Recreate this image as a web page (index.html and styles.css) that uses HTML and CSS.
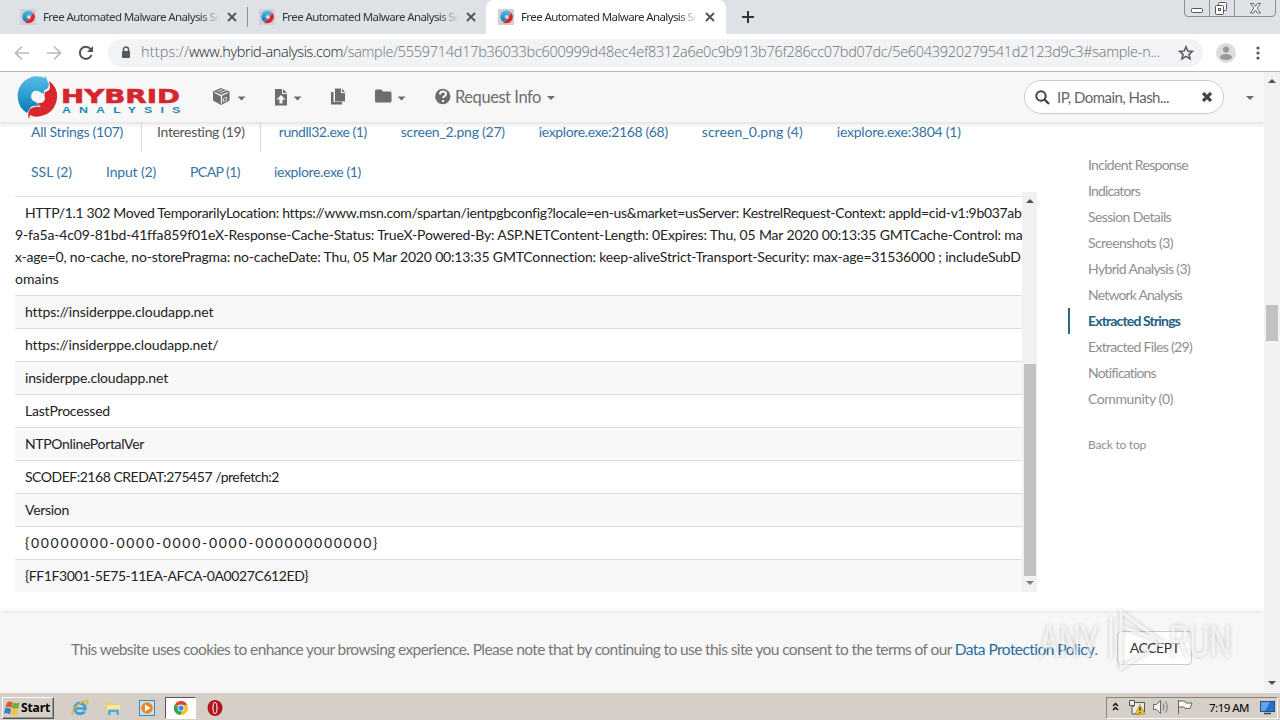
FILE: index.html
```html
<!DOCTYPE html>
<html lang="en">
<head>
<meta charset="utf-8">
<title>Free Automated Malware Analysis Service</title>
<link rel="stylesheet" href="styles.css">
</head>
<body>
<svg class="defs" width="0" height="0" aria-hidden="true">
  <defs>
    <linearGradient id="blue" x1="0" y1="0" x2="0" y2="1"><stop offset="0" stop-color="#5cbde8"/><stop offset=".5" stop-color="#2d9fd6"/><stop offset="1" stop-color="#0d78b0"/></linearGradient>
    <symbol id="swirl" viewBox="0 0 40 44">
      <path fill="url(#blue)" d="M28 0 28 3A19.500 19.500 0 0 0 1 17Q-1 31 10 38L14 32Q17 30 22 31L19 27Q14 26 14 21Q15 15 21 16L27 19Q26 15 30 14Q33 11 31 7Z"/>
      <path fill="#d9252c" d="M32 6Q41 12 40 23Q38 38 24 41Q18 43 13 40L12 44Q10 39 13 34Q17 31 24 32L20 28Q28 29 28 23Q27 19 28 17Q33 16 33 12Z"/>
    </symbol>
    <symbol id="close" viewBox="0 0 10 10"><path d="M1 1 9 9M9 1 1 9" stroke="#50545a" stroke-width="1.800"/></symbol>
    <symbol id="up" viewBox="0 0 8 4"><path fill="#505050" d="M0 4 4 0 8 4z"/></symbol>
    <symbol id="down" viewBox="0 0 8 4"><path fill="#505050" d="M0 0 4 4 8 0z"/></symbol>
  </defs>
</svg>

<header class="tabstrip">
  <div class="tab"><svg class="fav"><use href="#swirl" x="2" y="1" width="13" height="14"/></svg><span class="title"><span class="fit" data-w="178">Free Automated Malware Analysis Se</span></span><svg class="x"><use href="#close"/></svg></div>
  <div class="tab second"><svg class="fav"><use href="#swirl" x="2" y="1" width="13" height="14"/></svg><span class="title"><span class="fit" data-w="178">Free Automated Malware Analysis Se</span></span><svg class="x"><use href="#close"/></svg></div>
  <div class="tab active"><svg class="fav"><use href="#swirl" x="2" y="1" width="13" height="14"/></svg><span class="title"><span class="fit" data-w="178">Free Automated Malware Analysis Se</span></span><svg class="x"><use href="#close"/></svg></div>
  <svg class="plus" viewBox="0 0 12 12"><path d="M6 0V12M0 6H12" stroke="#333" stroke-width="2"/></svg>
  <svg class="winctl" viewBox="0 0 94 18"><path d="M1.500 0V13Q1.500 16.500 5 16.500H89Q92.500 16.500 92.500 13V0M26.500 0V16M51.500 0V16" fill="none" stroke="#8c9097"/><g fill="#fff" stroke="#555"><rect x="8.500" y="8.500" width="11" height="4" rx="1"/><rect x="35.500" y="2.500" width="8" height="8" rx="1"/><rect x="32.500" y="5.500" width="8" height="9" rx="1"/><rect x="35.500" y="8.500" width="2" height="2"/></g><path d="M67.500 3.500h3l2 3 2-3h3l-3.500 4.500 3.500 5h-3l-2-3-2 3h-3l3.500-5z" fill="#fff" stroke="#555" stroke-width=".9"/></svg>
</header>

<div class="toolbar">
  <svg class="navbtns" viewBox="0 0 100 28"><g fill="none" stroke-width="1.700"><path d="M29 14H16M22 7.500 15.500 14l6.500 6.500M47 14h13M54 7.500l6.500 6.500-6.500 6.500" stroke="#b9bbbd"/><path d="M90.500 10A6 6 0 1 0 91.500 16" stroke="#50545a" stroke-width="2"/></g><path d="M93 7v6h-6z" fill="#50545a"/></svg>
  <div class="omnibox">
    <svg class="lock" viewBox="0 0 10 13"><path d="M2.500 6V3.500a2.500 2.500 0 0 1 5 0V6" fill="none" stroke="#55595e" stroke-width="1.500"/><rect x="1" y="5" width="8" height="7" rx="1" fill="#55595e"/></svg>
    <div class="url"><span class="fit" data-w="48">https://</span><span class="fit host" data-w="154">www.hybrid-analysis.com</span><span class="fit" data-w="817">/sample/5559714d17b36033bc600999d48ec4ef8312a6e0c9b913b76f286cc07bd07dc/5e6043920279541d2123d9c3#sample-n...</span></div>
    <svg class="star" viewBox="0 0 16 16"><path d="M8 1.700 9.800 6l4.700.3-3.600 3 1.200 4.600L8 11.400l-4.100 2.500 1.200-4.600-3.600-3L6.200 6z" fill="none" stroke="#55595e" stroke-width="1.500"/></svg>
  </div>
  <svg class="avatar" viewBox="0 0 20 20"><circle cx="10" cy="10" r="10" fill="#dcdcdc"/><circle cx="10" cy="6.500" r="3" fill="#999"/><ellipse cx="10" cy="14" rx="6" ry="3" fill="#999"/></svg>
  <svg class="dots" viewBox="0 0 4 14"><g fill="#55595e"><circle cx="2" cy="2" r="1.600"/><circle cx="2" cy="7" r="1.600"/><circle cx="2" cy="12" r="1.600"/></g></svg>
</div>

<div class="viewport">
  <div class="page">
    <nav class="sitebar">
      <svg class="logo" viewBox="0 0 166 46"><use href="#swirl" x="0" y="1" width="42" height="44"/>
        <text class="l1" x="45" y="29" textLength="119" lengthAdjust="spacingAndGlyphs">HYBRID</text>
        <text class="l2" transform="translate(46 38.500) scale(1.300 1)" textLength="91">ANALYSIS</text></svg>
      <svg class="icons" viewBox="0 0 340 24"><g fill="#6d6d6d">
        <path d="M8 3 0 6.500v9L8 20l8.500-4.500v-9z"/><path d="M1.500 7.500 8 10.500 15 7.500M8.500 10.500V18.500" stroke="#f7f7f7" stroke-width="1.300" fill="none"/><path d="M4 6.500 10 4.500M6.500 8 13 5.500M10.500 13.500l3-1.300v3l-3 1.300z" stroke="#f7f7f7" stroke-width=".8" fill="none"/>
        <path d="M62 4h7v5h5v11.500H62zM70 4l4 4h-4z"/><path d="M68 10l4.500 4.500H69.500V18.500h-3v-4H63.500z" fill="#f7f7f7"/>
        <path d="M118 7h2.500v10H129v2.500H118zM122 3.500h6v4.500h4v8.500h-10zM129 3.500 132 7h-3z"/>
        <path d="M162 6q0-1.500 1.500-1.500H168q1.500 0 1.500 2H177q1.500 0 1.500 1.500v8q0 1.500-1.500 1.500H163.500Q162 17.500 162 16z"/>
        <circle cx="229.800" cy="11.500" r="7.700"/>
        <path d="M24.500 11.500h8l-4 4zM80.500 11.500h8l-4 4zM184.500 11.500h8l-4 4z"/></g>
        <path d="M227 9.500q0-3 3-3t3 2.500q0 1.500-1.800 2.300-1 .5-1 1.700M230 15v2" stroke="#fff" stroke-width="2" fill="none"/></svg>
      <span class="request"><span class="fit" data-w="86">Request Info</span></span>
      <svg class="caret" viewBox="0 0 8 4"><path d="M0 0h8L4 4z" fill="#6d6d6d"/></svg>
      <div class="search">
        <svg viewBox="0 0 15 15" width="15" height="15"><circle cx="6" cy="6" r="4.700" fill="none" stroke="#444" stroke-width="2"/><path d="m9.500 9.500 4.500 4.500" stroke="#444" stroke-width="2.400"/></svg>
        <span class="ph"><span class="fit" data-w="112">IP, Domain, Hash...</span></span>
        <svg viewBox="0 0 10 10" width="10" height="10"><path d="m1 1 8 8M9 1 1 9" stroke="#444" stroke-width="3.200"/></svg>
      </div>
      <svg class="caret" viewBox="0 0 8 4"><path d="M0 0h8L4 4z" fill="#6d6d6d"/></svg>
    </nav>

    <div class="columns">
      <main class="content">
        <ul class="pills">
          <li><span class="fit" data-w="92">All Strings (107)</span></li>
          <li class="on"><span class="fit" data-w="88">Interesting (19)</span></li>
          <li><span class="fit" data-w="88">rundll32.exe (1)</span></li>
          <li><span class="fit" data-w="104">screen_2.png (27)</span></li>
          <li><span class="fit" data-w="129">iexplore.exe:2168 (68)</span></li>
          <li><span class="fit" data-w="101">screen_0.png (4)</span></li>
          <li><span class="fit" data-w="124">iexplore.exe:3804 (1)</span></li>
        </ul>
        <ul class="pills">
          <li><span class="fit" data-w="41">SSL (2)</span></li>
          <li><span class="fit" data-w="50">Input (2)</span></li>
          <li><span class="fit" data-w="50">PCAP (1)</span></li>
          <li><span class="fit" data-w="87">iexplore.exe (1)</span></li>
        </ul>
        <div class="strings">
          <div class="rows">
            <div class="row long">
              <div class="first"><span class="fit" data-w="996">HTTP/1.1 302 Moved TemporarilyLocation: https://www.msn.com/spartan/ientpgbconfig?locale=en-us&amp;market=usServer: KestrelRequest-Context: appId=cid-v1:9b037ab</span></div>
              <div><span class="fit" data-w="1007">9-fa5a-4c09-81bd-41ffa859f01eX-Response-Cache-Status: TrueX-Powered-By: ASP.NETContent-Length: 0Expires: Thu, 05 Mar 2020 00:13:35 GMTCache-Control: ma</span></div>
              <div><span class="fit" data-w="1006">x-age=0, no-cache, no-storePragma: no-cacheDate: Thu, 05 Mar 2020 00:13:35 GMTConnection: keep-aliveStrict-Transport-Security: max-age=31536000 ; includeSubD</span></div>
              <div><span class="fit" data-w="44">omains</span></div>
            </div>
            <div class="row"><span class="fit" data-w="188">https://insiderppe.cloudapp.net</span></div>
            <div class="row"><span class="fit" data-w="193">https://insiderppe.cloudapp.net/</span></div>
            <div class="row"><span class="fit" data-w="143">insiderppe.cloudapp.net</span></div>
            <div class="row"><span class="fit" data-w="85">LastProcessed</span></div>
            <div class="row"><span class="fit" data-w="119">NTPOnlinePortalVer</span></div>
            <div class="row"><span class="fit" data-w="254">SCODEF:2168 CREDAT:275457 /prefetch:2</span></div>
            <div class="row"><span class="fit" data-w="44">Version</span></div>
            <div class="row"><span class="fit" data-w="354">{00000000-0000-0000-0000-000000000000}</span></div>
            <div class="row"><span class="fit" data-w="283">{FF1F3001-5E75-11EA-AFCA-0A0027C612ED}</span></div>
          </div>
          <div class="bar inner"><svg><use href="#up"/></svg><i class="thumb"></i><svg class="dim"><use href="#down"/></svg></div>
        </div>
      </main>
      <aside class="toc">
        <a><span class="fit" data-w="100">Incident Response</span></a>
        <a><span class="fit" data-w="52">Indicators</span></a>
        <a><span class="fit" data-w="83">Session Details</span></a>
        <a><span class="fit" data-w="85">Screenshots (3)</span></a>
        <a><span class="fit" data-w="102">Hybrid Analysis (3)</span></a>
        <a><span class="fit" data-w="94">Network Analysis</span></a>
        <a class="current"><span class="fit" data-w="92">Extracted Strings</span></a>
        <a><span class="fit" data-w="104">Extracted Files (29)</span></a>
        <a><span class="fit" data-w="68">Notifications</span></a>
        <a><span class="fit" data-w="85">Community (0)</span></a>
        <a class="top"><span class="fit" data-w="58">Back to top</span></a>
      </aside>
    </div>

    <div class="cookies">
      <span class="msg"><span class="fit" data-w="881">This website uses cookies to enhance your browsing experience. Please note that by continuing to use this site you consent to the terms of our</span></span>
      <span class="policy"><span class="fit" data-w="140">Data Protection Policy</span></span><span class="dot">.</span>
      <button class="accept"><span class="fit" data-w="50">ACCEPT</span></button>
      <svg class="watermark" viewBox="0 0 200 66">
        <g class="halo"><text x="4" y="49" textLength="60" lengthAdjust="spacingAndGlyphs">ANY</text><text x="134" y="49" textLength="63" lengthAdjust="spacingAndGlyphs">RUN</text><path d="M86 4v56l41-26zM86 18l34 13M76 9v40"/></g>
      </svg>
    </div>
  </div>
  <div class="bar outer"><svg><use href="#up"/></svg><i class="thumb"></i><svg><use href="#down"/></svg></div>
</div>

<footer class="taskbar">
  <div class="start"><svg viewBox="0 0 16 16" width="16" height="16"><path d="M3 2.500Q6 .5 8.500 2.500L7.500 8Q4.500 6 1.500 7.500z" fill="#e2562a"/><path d="M9 2.500q3 1.500 6.500 0L14.500 8q-3 1.500-6.500 0z" fill="#6eae3a"/><path d="M1 8.500q3-1.500 6 .5l-1 5.500Q3 12.500 0 14z" fill="#3b7fd0"/><path d="M7.800 9q3 1.500 6.200 0l-1 5.500q-3 1.500-6 0z" fill="#f4c430"/></svg><span class="fit" data-w="29">Start</span></div>
  <svg class="ie" viewBox="0 0 18 18" width="18" height="18"><circle cx="9" cy="9.500" r="5.300" fill="none" stroke="#3d9fdc" stroke-width="3"/><path d="M4 9.500h11" stroke="#3d9fdc" stroke-width="2.400"/><path d="M11 12.500h6v-2z" fill="#d4cfc8"/><path d="M2 16Q-1 12 7 6T16 2Q18 3 15.500 6" fill="none" stroke="#e7b52a" stroke-width="1.400"/></svg>
  <svg class="folder" viewBox="0 0 16 16" width="16" height="16"><path d="M1 2h5l1 2h8v8H1z" fill="#e9cf72"/><path d="M2 5h13v7H2z" fill="#f7e9a4"/><path d="M3 15V9.500h11V15h-2.500v-3h-6v3z" fill="#55acdc"/></svg>
  <svg class="media" viewBox="0 0 16 16" width="16" height="16"><rect x=".5" y=".5" width="15" height="15" fill="#c9e2f4" stroke="#4189bd"/><circle cx="8" cy="8" r="5.800" fill="#ef8420"/><path d="m6 4.500 5.500 3.500L6 11.500z" fill="#fff"/></svg>
  <div class="running"><svg viewBox="0 0 16 16" width="14" height="14"><circle cx="8" cy="8" r="8" fill="#f4c22b"/><path d="M8 8 1 4A8 8 0 0 0 7 16l3.500-6z" fill="#2ea457"/><path d="M1 4A8 8 0 0 1 15 4L8 6z" fill="#dc4334"/><circle cx="8" cy="8" r="3.900" fill="#fff"/><circle cx="8" cy="8" r="3" fill="#4285e8"/></svg></div>
  <svg class="opera" viewBox="0 0 16 16" width="16" height="16"><ellipse cx="8" cy="8" rx="7.500" ry="8" fill="#b5151c"/><ellipse cx="8" cy="8" rx="2.600" ry="6" fill="#fff"/><ellipse cx="8" cy="8" rx="1.500" ry="5" fill="#a5141a"/></svg>
  <div class="tray">
    <svg viewBox="0 0 100 22" width="100" height="22"><path d="m6 9 2.500-2.500L11 9M6 13l2.500-2.500L11 13" fill="none" stroke="#111" stroke-width="1.500"/>
      <rect x="26.500" y="5.500" width="11" height="9" fill="#e9e9e9" stroke="#555"/><path d="M22.500 3.500h5v5h-5zM25 8.500V17h8" fill="#eee" stroke="#555"/><path d="M33 7.500 38 17H28z" fill="#f5cf21" stroke="#8d7310" stroke-width=".6"/><path d="M33 10v4M33 15v1" stroke="#222" stroke-width="1.200"/>
      <path d="M46.500 7.500h3l4-4v13l-4-4h-3z" fill="#f2f2f2" stroke="#666"/><path d="M56 6.500q2 3.500 0 7M58.500 4.500q3.500 5.500 0 11" fill="none" stroke="#777"/>
      <path d="M71.500 3v14M71.500 4h6l1.500 2h6l-2 5.500h-5l-1-1.500h-5.500z" fill="#f7f7f7" stroke="#666"/></svg>
    <span class="clock"><span class="fit" data-w="40">7:19 AM</span></span>
    <svg class="desk" viewBox="0 0 15 14" width="15" height="14"><rect x=".5" y=".5" width="14" height="10" fill="#2470cf" stroke="#274d85"/><path d="M1 1h9L5 10H1z" fill="#62a3ee"/><path d="M4 12.500h7" stroke="#444" stroke-width="1.500"/></svg>
  </div>
</footer>
<script src="fit.js"></script>
</body>
</html>
```

FILE: styles.css
```css
* { box-sizing: border-box; }
body { margin: 0; width: 1280px; height: 720px; overflow: hidden; display: flex; flex-direction: column; background: #fff; font: 14px/22px Lato, sans-serif; color: #222; }
svg { display: block; flex: none; }
.defs { position: absolute; }
.fit { display: inline-block; white-space: pre; }

/* browser chrome */
.tabstrip { height: 34px; flex: none; display: flex; background: #dee1e6; font: 11.500px/34px "Noto Sans", sans-serif; color: #33363b; }
.tab { display: flex; align-items: center; width: 248px; padding-left: 20px; border-right: 1px solid transparent; border-image: linear-gradient(transparent 8px, #8f9399 8px, #8f9399 26px, transparent 26px) 1; }
.tab.second { width: 238px; padding-left: 11px; border: 0; }
.tab.active { width: 240px; padding-left: 12px; border: 0; background: #fff; border-radius: 8px 8px 0 0; color: #2b2d31; }
.fav { width: 16px; height: 16px; background: #d3cfd2; }
.title { width: 176px; margin-left: 7px; overflow: hidden; -webkit-mask-image: linear-gradient(90deg, #000 158px, transparent); mask-image: linear-gradient(90deg, #000 158px, transparent); }
.x { width: 10px; height: 10px; margin-left: 8px; }
.plus { width: 12px; height: 12px; margin: 11px 0 0 16px; }
.winctl { width: 94px; height: 18px; margin-left: auto; margin-right: 3px; }
.toolbar { height: 38px; flex: none; display: flex; align-items: center; background: #fff; border-bottom: 1px solid #b4b7b4; }
.navbtns { width: 100px; height: 28px; }
.omnibox { width: 1095px; height: 28px; margin-left: 8px; border-radius: 14px; background: #f1f3f4; display: flex; align-items: center; }
.lock { width: 10px; height: 13px; margin-left: 13px; }
.url { width: 1022px; height: 28px; margin-left: 10px; display: flex; font: 300 14.500px/26px "Open Sans", sans-serif; color: #6b7076; }
.host { color: #202124; }
.star { width: 16px; height: 16px; margin-left: 15px; }
.avatar { width: 20px; height: 20px; margin-left: 13px; }
.dots { width: 4px; height: 14px; margin-left: 20px; }

/* page */
.viewport { height: 620px; flex: none; display: flex; }
.page { width: 1264px; display: flex; flex-direction: column; overflow: hidden; }
.sitebar { height: 51px; flex: none; display: flex; align-items: center; background: #f7f7f7; border-bottom: 1px solid #e7e7e7; box-shadow: 0 1px 5px #0002; position: relative; z-index: 1; }
.logo { width: 166px; height: 46px; margin-left: 16px; }
.l1 { font: bold 20px "DejaVu Sans", sans-serif; fill: #d52630; stroke: #d52630; stroke-width: .6px; }
.l2 { font: bold 9.500px "Liberation Sans", sans-serif; fill: #168bb4; }
.icons { width: 340px; height: 24px; margin-left: 31px; margin-right: -98px; }
.request { font-size: 16.500px; color: #6d6d6d; width: 92px; }
.caret { width: 8px; height: 4px; margin-top: 2px; }
.search { margin-left: 469px; margin-right: 22px; width: 200px; height: 34px; border: 1px solid #ccc; border-radius: 17px; background: #fff; display: flex; align-items: center; padding: 0 11px 0 10px; font-size: 15px; color: #666; }
.ph { margin-left: 7px; margin-right: auto; }
.columns { display: flex; flex: none; height: 490px; padding-left: 15px; }
.content { width: 1022px; flex: none; }
.pills { list-style: none; display: flex; gap: 2px; height: 40px; margin: 0; padding: 0; color: #3572a5; }
.pills:first-child { height: 29px; }
.pills li { border: 1px solid transparent; padding: 8px 15px; }
.pills:first-child li { padding-top: 0; border-top: 0; line-height: 17px; }
.pills li.on { border-color: #ddd; border-bottom: 0; color: #555; }
.strings { display: flex; height: 400px; }
.rows { width: 1007px; padding-top: 4px; }
.row { height: 33px; padding: 5px 10px; border-top: 1px solid #ddd; }
.row:nth-child(even) { background: #f8f8f8; }
.row.long { height: 99px; padding: 5px 0; }
.row div { height: 22px; white-space: nowrap; }
.row .first { padding-left: 10px; }
.bar { background: #f1f1f1; display: flex; flex-direction: column; align-items: center; }
.bar svg { width: 8px; height: 4px; margin: 7px 0 6px; }
.inner { width: 15px; }
.inner .thumb { width: 12px; height: 212px; margin-top: 155px; background: #c1c1c1; }
.inner .dim { margin-top: 5px; opacity: .7; }
.outer { width: 16px; }
.outer .thumb { width: 12px; height: 36px; margin: 216px 0 auto; background: #c1c1c1; }
.outer .thumb + svg { margin-bottom: 7px; }
.toc { margin: 29px 0 0 31px; display: flex; flex-direction: column; }
.toc a { height: 26px; line-height: 25px; padding-left: 18px; border-left: 2px solid transparent; font-size: 14px; color: #8f8f8f; }
.toc .current { border-color: #2c6587; color: #255f83; font-weight: bold; }
.toc .top { margin-top: 20px; font-size: 12px; }

/* cookie notice */
.cookies { height: 79px; flex: none; background: #f7f7f7; box-shadow: 0 -1px 5px #0002; display: flex; align-items: center; padding: 0 0 7px 71px; font-size: 15.500px; color: #777; position: relative; }
.policy { margin-left: 3px; color: #2a6b9c; }
.accept { width: 75px; height: 34px; margin: 0 0 3px 19px; padding: 0; background: #fff; border: 1px solid #ccc; border-radius: 4px; font: 14px Lato, sans-serif; color: #333; }
.watermark { position: absolute; left: 1035px; top: -5px; width: 200px; height: 66px; }
.halo { font: 400 45px "Roboto", sans-serif; fill: #fff9; filter: drop-shadow(0 0 2px #0005); }
.halo path { fill: none; stroke: #fffa; stroke-width: 3; }

/* taskbar */
.taskbar { height: 28px; flex: none; display: flex; align-items: center; background: #d5cfc8; border-top: 1px solid #f5f3ef; padding: 2px 2px 0; color: #000; }
.start { width: 52px; height: 22px; display: flex; align-items: center; padding-left: 1px; gap: 1px; border: 1px solid; border-color: #fff #555 #555 #fff; box-shadow: inset -1px -1px #999; font: bold 12px "Noto Sans", sans-serif; }
.ie { margin-left: 17px; }
.folder { margin-left: 16px; }
.media { margin-left: 18px; }
.running { width: 31px; height: 22px; margin-left: 10px; display: flex; align-items: center; justify-content: center; background: #fff; border: 1px solid; border-color: #555 #fff #fff #555; }
.opera { margin-left: 11px; }
.tray { width: 172px; height: 22px; margin-left: auto; border: 1px solid; border-color: #88847e #fff #fff #88847e; display: flex; align-items: center; font: 11.500px/20px "Noto Sans", sans-serif; }
.clock { margin-left: 2px; width: 51px; }
```

FILE: fit.js
```js
// Spread the letters of each label over the width given in data-w.
document.querySelectorAll('.fit').forEach(function (el) {
  var natural = el.getBoundingClientRect().width;
  el.style.letterSpacing = (el.dataset.w - natural) / el.textContent.length + 'px';
});
```
